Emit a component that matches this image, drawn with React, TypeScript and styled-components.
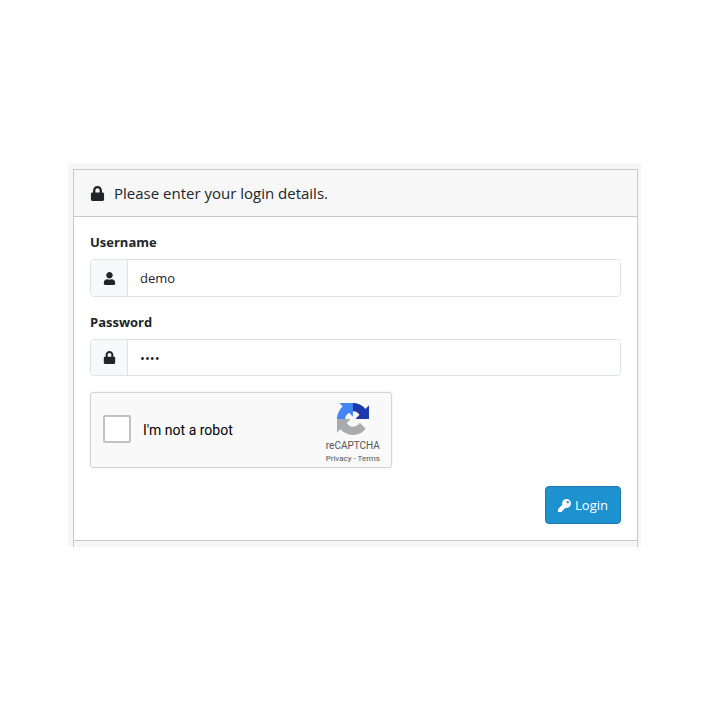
import React from "react";
import styled, { createGlobalStyle } from "styled-components";
import { FaLock, FaUser, FaKey } from "react-icons/fa";

const GlobalStyle = createGlobalStyle`
  *, *::before, *::after { box-sizing: border-box; }
  body {
    margin: 0;
    background: #fff;
    color: #212529;
    font: 13px/20px "Open Sans", sans-serif;
  }
`;

const Page = styled.main`
  width: 710px;
  height: 710px;
  padding: 163px 69px 163px 68px;
  overflow: hidden;
`;

const Backdrop = styled.div`
  height: 384px;
  padding: 6px 3px 0 5px;
  background: #f6f6f6;
  overflow: hidden;
`;

const Card = styled.section`
  border: 1px solid #c8c8c8;
  border-bottom: 0;
  background: #fff;
`;

const CardHeader = styled.header`
  display: flex;
  align-items: center;
  gap: 9px;
  height: 47px;
  padding: 0 16px;
  border-bottom: 1px solid #c8c8c8;
  background: #f7f7f7;
  font-size: 15px;
`;

const CardBody = styled.form`
  height: 323px;
  padding: 15px 16px 0;
`;

const CardFooter = styled.footer`
  height: 40px;
  border-top: 1px solid #c8c8c8;
  background: #f7f7f7;
`;

const Field = styled.div`
  margin-bottom: 15px;
`;

const Label = styled.label`
  display: block;
  margin-bottom: 7px;
  font-weight: 700;
`;

const InputGroup = styled.div<{ $height: number }>`
  display: flex;
  height: ${(p) => p.$height}px;
  border: 1px solid #dee2e6;
  border-radius: 4px;
  overflow: hidden;
`;

const Addon = styled.span`
  display: flex;
  align-items: center;
  justify-content: center;
  width: 37px;
  border-right: 1px solid #dee2e6;
  background: #f8f9fa;
`;

const Input = styled.input`
  flex: 1;
  min-width: 0;
  padding: 0 12px;
  border: 0;
  outline: 0;
  background: #fff;
  color: #212529;
  font: inherit;
`;

const Captcha = styled.div`
  display: flex;
  align-items: center;
  width: 302px;
  height: 76px;
  margin-top: 16px;
  padding: 0 11px 0 12px;
  border: 1px solid #d3d3d3;
  border-radius: 3px;
  background: #f9f9f9;
  box-shadow: 0 0 3px rgba(0, 0, 0, 0.08);
  color: #000;
  font-family: Roboto, sans-serif;
`;

const Checkbox = styled.span`
  width: 28px;
  height: 28px;
  margin: 0 12px 2px 0;
  border: 2px solid #c1c1c1;
  border-radius: 2px;
  background: #fff;
`;

const CaptchaText = styled.span`
  flex: 1;
  font-size: 14px;
  line-height: 17px;
`;

const Brand = styled.div`
  display: flex;
  flex-direction: column;
  align-items: center;
  height: 100%;
  padding-top: 10px;
  color: #555;
  font-family: Roboto, sans-serif;
`;

const BrandName = styled.span`
  margin-top: 5px;
  font-size: 10px;
  line-height: 12px;
`;

const BrandLinks = styled.span`
  margin-top: 1px;
  font-size: 8px;
  line-height: 11px;
  white-space: pre;
`;

const Actions = styled.div`
  display: flex;
  justify-content: flex-end;
  margin-top: 18px;
`;

const Button = styled.button`
  display: flex;
  align-items: center;
  justify-content: center;
  gap: 4px;
  width: 76px;
  height: 38px;
  padding: 0;
  border: 1px solid #1b79ad;
  border-radius: 4px;
  background: #1e91cf;
  color: #fff;
  font: inherit;
`;

const RecaptchaLogo = () => (
  <svg width="32" height="32" viewBox="0 0 64 64" aria-hidden="true">
    <path fill="#1c3aa9" d="M64 31.955l-.033-1.37V4.687l-7.16 7.16C50.948 4.674 42.033.093 32.05.093c-10.4 0-19.622 4.96-25.458 12.64l11.736 11.86a15.55 15.55 0 0 1 4.754-5.334c2.05-1.6 4.952-2.906 8.968-2.906.485 0 .86.057 1.135.163 4.976.393 9.288 3.14 11.828 7.124l-8.307 8.307L64 31.953" />
    <path fill="#4285f4" d="M31.862.094l-1.37.033H4.594l7.16 7.16C4.58 13.147 0 22.06 0 32.046c0 10.4 4.96 19.622 12.64 25.458L24.5 45.768a15.55 15.55 0 0 1-5.334-4.754c-1.6-2.05-2.906-4.952-2.906-8.968 0-.485.057-.86.163-1.135.393-4.976 3.14-9.288 7.124-11.828l8.307 8.307L31.86.095" />
    <path fill="#ababab" d="M.001 32.045l.033 1.37v25.898l7.16-7.16c5.86 7.173 14.774 11.754 24.76 11.754 10.4 0 19.622-4.96 25.458-12.64l-11.736-11.86a15.55 15.55 0 0 1-4.754 5.334c-2.05 1.6-4.952 2.906-8.968 2.906-.485 0-.86-.057-1.135-.163-4.976-.393-9.288-3.14-11.828-7.124l8.307-8.307-31.3.033" />
  </svg>
);

export default function App() {
  return (
    <>
      <GlobalStyle />
      <Page>
        <Backdrop>
          <Card>
            <CardHeader>
              <FaLock size={15} />
              <span>Please enter your login details.</span>
            </CardHeader>
            <CardBody onSubmit={(e) => e.preventDefault()}>
              <Field>
                <Label htmlFor="username">Username</Label>
                <InputGroup $height={38}>
                  <Addon><FaUser size={13} /></Addon>
                  <Input id="username" type="text" defaultValue="demo" />
                </InputGroup>
              </Field>
              <Field>
                <Label htmlFor="password">Password</Label>
                <InputGroup $height={37}>
                  <Addon><FaLock size={13} /></Addon>
                  <Input id="password" type="password" defaultValue="demo" />
                </InputGroup>
              </Field>
              <Captcha>
                <Checkbox role="checkbox" aria-checked={false} />
                <CaptchaText>I'm not a robot</CaptchaText>
                <Brand>
                  <RecaptchaLogo />
                  <BrandName>reCAPTCHA</BrandName>
                  <BrandLinks>Privacy - Terms</BrandLinks>
                </Brand>
              </Captcha>
              <Actions>
                <Button type="submit">
                  <FaKey size={13} />
                  <span>Login</span>
                </Button>
              </Actions>
            </CardBody>
            <CardFooter />
          </Card>
        </Backdrop>
      </Page>
    </>
  );
}
